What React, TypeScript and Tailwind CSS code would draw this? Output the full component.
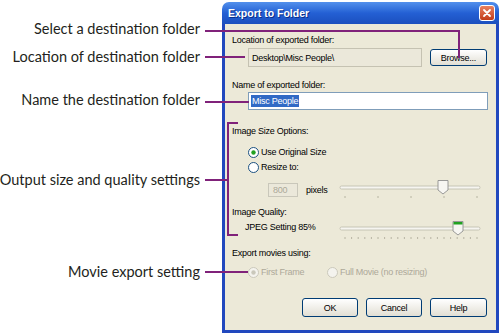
import React from 'react';

const labels = [
  { text: 'Select a destination folder', mt: 'mt-[19px]' },
  { text: 'Location of destination folder', mt: 'mt-[8px]' },
  { text: 'Name the destination folder', mt: 'mt-[23px]' },
  { text: 'Output size and quality settings', mt: 'mt-[60px]' },
  { text: 'Movie export setting', mt: 'mt-[72px]' },
];

function Radio({ checked, disabled }: { checked?: boolean; disabled?: boolean }) {
  const ring = disabled ? '#CAC8BB' : '#1C5180';
  const dot = disabled ? '#CAC8BB' : '#21A121';
  return (
    <svg width="11" height="11" viewBox="0 0 11 11" className="shrink-0">
      <circle cx="5.5" cy="5.5" r="5" fill={disabled ? '#F4F3EE' : '#FFFFFF'} stroke={ring} strokeWidth="1" />
      {checked && <circle cx="5.5" cy="5.5" r="2.2" fill={dot} />}
    </svg>
  );
}

function Slider({ thumb, ticks, green }: { thumb: number; ticks: number; green?: boolean }) {
  const xs = Array.from({ length: ticks }, (_, i) => 9 + (i * 132) / (ticks - 1));
  return (
    <svg width="148" height="20" viewBox="0 0 148 20" className="shrink-0">
      <rect x="4" y="6" width="140" height="3" rx="1.5" fill="#F6F5F0" stroke="#BDBAAB" strokeWidth="0.8" />
      {xs.map((x, i) => (
        <line key={i} x1={x} y1="16" x2={x} y2="18" stroke="#A9A695" strokeWidth="0.8" />
      ))}
      <path
        d={`M${thumb - 5} 0.5 H${thumb + 5} V10 L${thumb} 14 L${thumb - 5} 10 Z`}
        fill="#F7F6F2"
        stroke="#8E8F8F"
        strokeWidth="0.9"
      />
      {green && <rect x={thumb - 4.5} y="1" width="9" height="2.5" fill="#21A121" />}
    </svg>
  );
}

function XpButton({ children, w, h }: { children: React.ReactNode; w: string; h: string }) {
  return (
    <div
      className={`${w} ${h} flex items-center justify-center rounded-[3px] border border-[#003C74] bg-gradient-to-b from-white to-[#E2DFD4] text-black`}
    >
      {children}
    </div>
  );
}

export default function App() {
  return (
    <div className="relative w-[500px] h-[334px] bg-white overflow-hidden flex">
      <div
        className="w-[222px] shrink-0 flex flex-col items-end pr-[22px] text-[14.5px] text-[#231F20]"
        style={{ fontFamily: 'Lato, "Liberation Sans", sans-serif' }}
      >
        {labels.map(l => (
          <div key={l.text} className={`${l.mt} h-[20px] leading-[20px] whitespace-nowrap`}>
            {l.text}
          </div>
        ))}
      </div>

      <div
        className="mt-[2px] w-[277px] h-[331px] shrink-0 flex flex-col text-[9px] tracking-[-0.25px] leading-[12px] text-black"
        style={{ fontFamily: '"Liberation Sans", Arial, sans-serif' }}
      >
        {/* title bar */}
        <div className="h-[22px] shrink-0 flex items-center pl-[6px] pr-[4px] rounded-t-[7px] bg-gradient-to-b from-[#5390EC] via-[#2460D4] to-[#1B4FBE]">
          <span className="text-white font-bold text-[10.5px] tracking-normal [text-shadow:1px_1px_0_#0A2E8A]">Export to Folder</span>
          <div className="ml-auto w-[16px] h-[16px] rounded-[3px] border border-white bg-gradient-to-b from-[#E8805F] to-[#C23B17] flex items-center justify-center">
            <svg width="10" height="10" viewBox="0 0 10 10">
              <path d="M2 2 L8 8 M8 2 L2 8" stroke="white" strokeWidth="1.8" strokeLinecap="round" />
            </svg>
          </div>
        </div>

        {/* body */}
        <div className="flex-1 flex flex-col bg-[#ECE9D8] border-x-[3px] border-b-[3px] border-[#2148BE] pl-[7px]">
          <div className="mt-[10px]">Location of exported folder:</div>
          <div className="mt-[2px] flex items-center">
            <div className="ml-[16px] w-[174px] h-[19px] flex items-center pl-[3px] bg-[#EBE8DA] border border-[#C5C2B2]">
              Desktop\Misc People\
            </div>
            <div className="ml-[8px]">
              <XpButton w="w-[57px]" h="h-[17px]">Browse...</XpButton>
            </div>
          </div>

          <div className="mt-[12px]">Name of exported folder:</div>
          <div className="mt-[1px] ml-[16px] w-[240px] h-[18px] flex items-center pl-[2px] bg-white border border-[#7F9DB9]">
            <span className="bg-[#316AC5] text-white px-[1px]">Misc People</span>
          </div>

          <div className="mt-[15px]">Image Size Options:</div>
          <div className="mt-[9px] ml-[16px] h-[12px] flex items-center gap-[2px]">
            <Radio checked />
            <span>Use Original Size</span>
          </div>
          <div className="mt-[3px] ml-[16px] h-[12px] flex items-center gap-[2px]">
            <Radio />
            <span>Resize to:</span>
          </div>
          <div className="mt-[7px] h-[20px] flex items-start">
            <div className="mt-[3px] ml-[36px] w-[30px] h-[14px] flex items-center pl-[4px] bg-[#EBE8DA] border border-[#C9C7BA] text-[#ACA899]">
              800
            </div>
            <span className="mt-[4px] ml-[8px]">pixels</span>
            <div className="ml-auto mr-[12px]">
              <Slider thumb={107} ticks={5} />
            </div>
          </div>

          <div className="mt-[6px]">Image Quality:</div>
          <div className="mt-[3px] h-[20px] flex items-start">
            <span className="ml-[13px]">JPEG Setting 85%</span>
            <div className="ml-auto mr-[12px]">
              <Slider thumb={122} ticks={21} green />
            </div>
          </div>

          <div className="mt-[6px]">Export movies using:</div>
          <div className="mt-[7px] h-[12px] flex items-center text-[#ACA899]">
            <div className="ml-[16px] w-[79px] flex items-center gap-[2px]">
              <Radio checked disabled />
              <span>First Frame</span>
            </div>
            <div className="flex items-center gap-[2px]">
              <Radio disabled />
              <span>Full Movie (no resizing)</span>
            </div>
          </div>

          <div className="mt-[20px] flex justify-end gap-[8px] pr-[9px]">
            <XpButton w="w-[56px]" h="h-[19px]">OK</XpButton>
            <XpButton w="w-[56px]" h="h-[19px]">Cancel</XpButton>
            <XpButton w="w-[57px]" h="h-[19px]">Help</XpButton>
          </div>
        </div>
      </div>

      {/* callout lines */}
      <svg className="absolute inset-0 pointer-events-none" width="500" height="334" viewBox="0 0 500 334">
        <g fill="none" stroke="#80227A" strokeWidth="2">
          <path d="M205 31 H459 V58" />
          <path d="M205 57 H245" />
          <path d="M205 102 H249" />
          <path d="M205 180 H228" />
          <path d="M238 123 H228 V235 H238" />
          <path d="M205 272 H248" />
        </g>
      </svg>
    </div>
  );
}
